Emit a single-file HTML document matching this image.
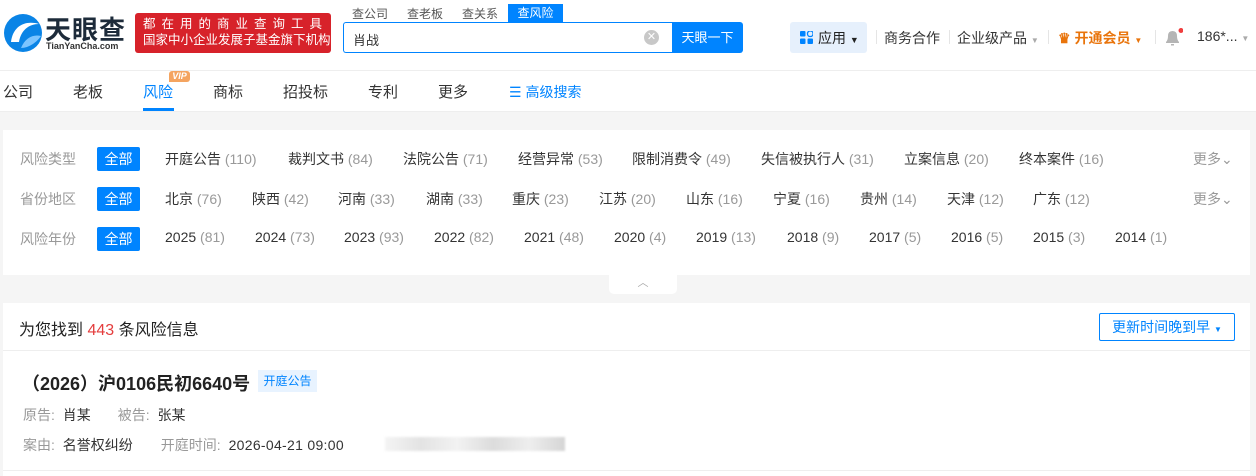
<!DOCTYPE html>
<html><head><meta charset="utf-8"><style>
*{margin:0;padding:0;box-sizing:border-box}
body{width:1256px;height:476px;overflow:hidden;background:#f5f5f5;font-family:"Liberation Sans","Noto Sans CJK SC",sans-serif;color:#333;position:relative}
.a{position:absolute;white-space:nowrap}
.n{color:#999}
.f{font-size:14px}
.all{position:absolute;background:#0084ff;color:#fff;font-size:14px;width:43px;height:24px;line-height:24px;text-align:center;border-radius:2px}
</style></head><body>
<div class="a" style="left:0;top:0;width:1256px;height:112px;background:#fff;border-bottom:1px solid #eee"></div>
<div class="a" style="left:0;top:70px;width:1256px;height:1px;background:#eee"></div>
<svg class="a" style="left:3px;top:12px" width="40" height="42" viewBox="0 0 40 42"><circle cx="20" cy="21" r="19" fill="#0a84e6"/><path d="M8 30 C10 14 22 8 36 12 C26 12 18 18 16 30 Z" fill="#fff"/><path d="M18 36 C22 26 30 22 38 24 C34 30 26 36 18 36Z" fill="#7cc4ff"/></svg>
<div class="a" style="left:45px;top:10px;font-size:26px;font-weight:bold;color:#1d2b3a;letter-spacing:1px">天眼查</div>
<div class="a" style="left:46px;top:41px;font-size:9px;font-weight:bold;color:#333">TianYanCha.com</div>
<div class="a" style="left:135px;top:13px;width:196px;height:40px;background:#d7222a;border-radius:3px;color:#fff;font-size:12.5px;line-height:16px;padding:3px 0 0 8px"><div style="letter-spacing:6px">都在用的商业查询工具</div><div>国家中小企业发展子基金旗下机构</div></div>
<div class="a f" style="left:352px;top:5px;font-size:12px;color:#555">查公司</div>
<div class="a f" style="left:407px;top:5px;font-size:12px;color:#555">查老板</div>
<div class="a f" style="left:462px;top:5px;font-size:12px;color:#555">查关系</div>
<div class="a" style="left:508px;top:4px;width:55px;height:18px;background:#0084ff;color:#fff;font-size:12px;text-align:center;line-height:18px">查风险</div>
<div class="a" style="left:343px;top:22px;width:329px;height:31px;border:1px solid #0084ff;border-right:none;border-radius:3px 0 0 3px;font-size:13px;padding:7px 9px">肖战</div>
<div class="a" style="left:644px;top:30px;width:15px;height:15px;border-radius:50%;background:#c8c8c8;color:#fff;font-size:11px;line-height:15px;text-align:center">✕</div>
<div class="a" style="left:672px;top:22px;width:71px;height:31px;background:#0084ff;color:#fff;font-size:13px;line-height:31px;text-align:center;border-radius:0 3px 3px 0">天眼一下</div>
<div class="a" style="left:790px;top:22px;width:77px;height:31px;background:#e6f0fc;border-radius:3px"></div>
<svg class="a" style="left:800px;top:31px" width="13" height="13"><rect x="0" y="0" width="5.5" height="5.5" rx="1" fill="#0084ff"/><rect x="7.5" y="0" width="5.5" height="5.5" rx="2.5" fill="none" stroke="#0084ff" stroke-width="1.3"/><rect x="0" y="7.5" width="5.5" height="5.5" rx="1" fill="#0084ff"/><rect x="7.5" y="7.5" width="5.5" height="5.5" rx="1" fill="#0084ff"/></svg>
<div class="a" style="left:818px;top:28px;font-size:14px;color:#222">应用 <span style="font-size:9px">▼</span></div>
<div class="a" style="left:876px;top:30px;width:1px;height:14px;background:#e5e5e5"></div>
<div class="a" style="left:884px;top:28px;font-size:14px">商务合作</div>
<div class="a" style="left:949px;top:30px;width:1px;height:14px;background:#e5e5e5"></div>
<div class="a" style="left:957px;top:28px;font-size:14px">企业级产品 <span style="font-size:8px;color:#aaa">▼</span></div>
<div class="a" style="left:1048px;top:30px;width:1px;height:14px;background:#e5e5e5"></div>
<div class="a" style="left:1058px;top:28px;font-size:14px;color:#e9740b;font-weight:bold">♛ 开通会员 <span style="font-size:8px">▼</span></div>
<div class="a" style="left:1155px;top:30px;width:1px;height:14px;background:#e5e5e5"></div>
<svg class="a" style="left:1163px;top:28px" width="20" height="20"><path d="M3 15 L3 14 Q5 12 5 8 Q5 3 9.5 3 Q14 3 14 8 Q14 12 16 14 L16 15 Z M8 16 h3 v1.5 h-3Z" fill="#b5b5b5"/><circle cx="18" cy="2.5" r="2.5" fill="#f03e3e"/></svg>
<div class="a" style="left:1197px;top:28px;font-size:14px">186*... <span style="font-size:8px;color:#aaa">▼</span></div>
<div class="a" style="left:3px;top:81px;font-size:15px">公司</div>
<div class="a" style="left:73px;top:81px;font-size:15px">老板</div>
<div class="a" style="left:143px;top:81px;font-size:15px;color:#0084ff">风险</div>
<div class="a" style="left:143px;top:108px;width:31px;height:3px;background:#0084ff"></div>
<div class="a" style="left:169px;top:71px;width:21px;height:11px;background:#f4a460;color:#fff;font-size:9px;font-weight:bold;font-style:italic;text-align:center;line-height:11px;border-radius:3px 3px 3px 0">VIP</div>
<div class="a" style="left:213px;top:81px;font-size:15px">商标</div>
<div class="a" style="left:283px;top:81px;font-size:15px">招投标</div>
<div class="a" style="left:368px;top:81px;font-size:15px">专利</div>
<div class="a" style="left:438px;top:81px;font-size:15px">更多</div>
<div class="a" style="left:509px;top:82px;font-size:14px;color:#0084ff">☰ 高级搜索</div>
<div class="a" style="left:3px;top:130px;width:1247px;height:145px;background:#fff"></div>
<div class="a" style="left:609px;top:272px;width:68px;height:22px;background:#fff;border-radius:0 0 5px 5px;color:#aaa;font-size:11px;text-align:center;line-height:22px">︿</div>
<div class="a f n" style="left:20px;top:149px">风险类型</div><div class="all" style="left:97px;top:147px">全部</div>
<div class="a f" style="left:165px;top:149px">开庭公告 <span class="n">(110)</span></div>
<div class="a f" style="left:288px;top:149px">裁判文书 <span class="n">(84)</span></div>
<div class="a f" style="left:403px;top:149px">法院公告 <span class="n">(71)</span></div>
<div class="a f" style="left:518px;top:149px">经营异常 <span class="n">(53)</span></div>
<div class="a f" style="left:632px;top:149px">限制消费令 <span class="n">(49)</span></div>
<div class="a f" style="left:761px;top:149px">失信被执行人 <span class="n">(31)</span></div>
<div class="a f" style="left:904px;top:149px">立案信息 <span class="n">(20)</span></div>
<div class="a f" style="left:1019px;top:149px">终本案件 <span class="n">(16)</span></div>
<div class="a f n" style="left:1193px;top:149px">更多⌄</div>
<div class="a f n" style="left:20px;top:189px">省份地区</div><div class="all" style="left:97px;top:187px">全部</div>
<div class="a f" style="left:165px;top:189px">北京 <span class="n">(76)</span></div>
<div class="a f" style="left:252px;top:189px">陕西 <span class="n">(42)</span></div>
<div class="a f" style="left:338px;top:189px">河南 <span class="n">(33)</span></div>
<div class="a f" style="left:426px;top:189px">湖南 <span class="n">(33)</span></div>
<div class="a f" style="left:512px;top:189px">重庆 <span class="n">(23)</span></div>
<div class="a f" style="left:599px;top:189px">江苏 <span class="n">(20)</span></div>
<div class="a f" style="left:686px;top:189px">山东 <span class="n">(16)</span></div>
<div class="a f" style="left:773px;top:189px">宁夏 <span class="n">(16)</span></div>
<div class="a f" style="left:860px;top:189px">贵州 <span class="n">(14)</span></div>
<div class="a f" style="left:947px;top:189px">天津 <span class="n">(12)</span></div>
<div class="a f" style="left:1033px;top:189px">广东 <span class="n">(12)</span></div>
<div class="a f n" style="left:1193px;top:189px">更多⌄</div>
<div class="a f n" style="left:20px;top:229px">风险年份</div><div class="all" style="left:97px;top:227px">全部</div>
<div class="a f" style="left:165px;top:229px">2025 <span class="n">(81)</span></div>
<div class="a f" style="left:255px;top:229px">2024 <span class="n">(73)</span></div>
<div class="a f" style="left:344px;top:229px">2023 <span class="n">(93)</span></div>
<div class="a f" style="left:434px;top:229px">2022 <span class="n">(82)</span></div>
<div class="a f" style="left:524px;top:229px">2021 <span class="n">(48)</span></div>
<div class="a f" style="left:614px;top:229px">2020 <span class="n">(4)</span></div>
<div class="a f" style="left:696px;top:229px">2019 <span class="n">(13)</span></div>
<div class="a f" style="left:787px;top:229px">2018 <span class="n">(9)</span></div>
<div class="a f" style="left:869px;top:229px">2017 <span class="n">(5)</span></div>
<div class="a f" style="left:951px;top:229px">2016 <span class="n">(5)</span></div>
<div class="a f" style="left:1033px;top:229px">2015 <span class="n">(3)</span></div>
<div class="a f" style="left:1115px;top:229px">2014 <span class="n">(1)</span></div>
<div class="a" style="left:3px;top:303px;width:1247px;height:173px;background:#fff"></div>
<div class="a" style="left:3px;top:350px;width:1247px;height:1px;background:#eee"></div>
<div class="a" style="left:19px;top:316px;font-size:16px;color:#222">为您找到 <span style="color:#e43d3d">443</span> 条风险信息</div>
<div class="a" style="left:1099px;top:313px;width:136px;height:28px;border:1px solid #0084ff;border-radius:2px;color:#0084ff;font-size:14px;line-height:26px;text-align:center">更新时间晚到早 <span style="font-size:8px">▼</span></div>
<div class="a" style="left:22px;top:370px;font-size:18px;font-weight:bold;color:#222">（2026）沪0106民初6640号</div>
<div class="a" style="left:258px;top:370px;width:59px;height:22px;background:#e8f3ff;color:#0084ff;font-size:12px;line-height:22px;text-align:center">开庭公告</div>
<div class="a" style="left:23px;top:405px;font-size:14px;color:#999">原告: <span style="color:#333;margin-left:4px">肖某</span><span style="margin-left:27px">被告: </span><span style="color:#333;margin-left:4px">张某</span></div>
<div class="a" style="left:23px;top:435px;font-size:14px;color:#999">案由: <span style="color:#333;margin-left:4px">名誉权纠纷</span><span style="margin-left:28px">开庭时间: </span><span style="color:#333;margin-left:4px;letter-spacing:0.3px">2026-04-21 09:00</span></div>
<div class="a" style="left:385px;top:437px;width:180px;height:14px;background:linear-gradient(90deg,#f4f4f4,#e3e3e3,#f2f2f2,#dcdcdc,#eee,#d5d5d5);filter:blur(1px)"></div>
<div class="a" style="left:3px;top:470px;width:1247px;height:1px;background:#eee"></div>
</body></html>
